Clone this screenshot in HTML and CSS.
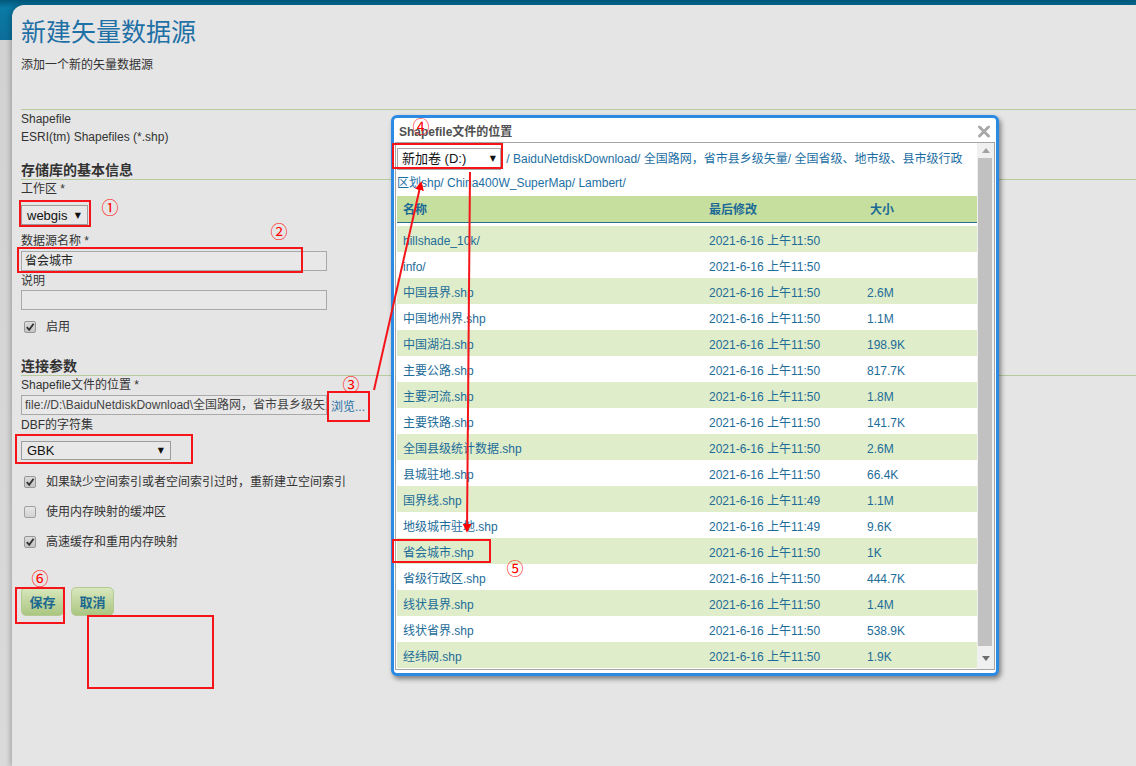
FILE: index.html
```html
<!DOCTYPE html>
<html lang="zh-CN">
<head>
<meta charset="utf-8">
<title>新建矢量数据源</title>
<link rel="stylesheet" href="styles.css">
</head>
<body>
<div class="app">
  <div class="rail"></div>
  <main class="card">
    <h1 class="title">新建矢量数据源</h1>
    <p class="subtitle">添加一个新的矢量数据源</p>
    <div class="store-type">
      <div>Shapefile</div>
      <div>ESRI(tm) Shapefiles (*.shp)</div>
    </div>

    <h2 class="section">存储库的基本信息</h2>
    <label class="lbl">工作区 *</label>
    <div class="select sel-ws"><span>webgis</span><span class="caret">▼</span></div>
    <label class="lbl lbl-name">数据源名称 *</label>
    <div class="input field-name">省会城市</div>
    <label class="lbl lbl-desc">说明</label>
    <div class="input"></div>
    <div class="check-row row-enable"><span class="cb checked"><svg width="10" height="10" viewBox="0 0 10 10"><path d="M1.8 5.2 L4.2 7.8 L8.6 1.8" fill="none" stroke="#333" stroke-width="1.9"/></svg></span>启用</div>

    <h2 class="section sec-conn">连接参数</h2>
    <label class="lbl">Shapefile文件的位置 *</label>
    <div class="path-row">
      <div class="input path">file://D:\BaiduNetdiskDownload\全国路网，省市县乡级矢量\全国省级、地市级、县市级行政区划shp\China400W_SuperMap\Lambert\省会城市.shp</div>
      <a class="browse">浏览...</a>
    </div>
    <label class="lbl lbl-dbf">DBF的字符集</label>
    <div class="select sel-cs"><span>GBK</span><span class="caret">▼</span></div>
    <div class="check-row opt first"><span class="cb checked"><svg width="10" height="10" viewBox="0 0 10 10"><path d="M1.8 5.2 L4.2 7.8 L8.6 1.8" fill="none" stroke="#333" stroke-width="1.9"/></svg></span>如果缺少空间索引或者空间索引过时，重新建立空间索引</div>
    <div class="check-row opt"><span class="cb"></span>使用内存映射的缓冲区</div>
    <div class="check-row opt"><span class="cb checked"><svg width="10" height="10" viewBox="0 0 10 10"><path d="M1.8 5.2 L4.2 7.8 L8.6 1.8" fill="none" stroke="#333" stroke-width="1.9"/></svg></span>高速缓存和重用内存映射</div>

    <div class="buttons">
      <button class="btn">保存</button>
      <button class="btn">取消</button>
    </div>
  </main>
</div>

<div class="dialog">
  <div class="dlg-head">
    <span>Shapefile文件的位置</span>
    <svg class="close" width="14" height="13" viewBox="0 0 14 13"><path d="M2.5 2 L11.5 11 M11.5 2 L2.5 11" stroke="#a9a9a9" stroke-width="3" stroke-linecap="round"/></svg>
  </div>
  <div class="dlg-body">
    <div class="dlg-scroll">
      <div class="crumbs"><span class="drive"><span>新加卷 (D:)</span><span class="caret">▼</span></span> / BaiduNetdiskDownload/ 全国路网，省市县乡级矢量/ 全国省级、地市级、县市级行政区划shp/ China400W_SuperMap/ Lambert/</div>
      <div class="grid grid-head"><span>名称</span><span>最后修改</span><span class="c3">大小</span></div>
      <div class="rows">
        <div class="grid row"><span>hillshade_10k/</span><span>2021-6-16 上午11:50</span><span></span></div>
        <div class="grid row"><span>info/</span><span>2021-6-16 上午11:50</span><span></span></div>
        <div class="grid row"><span>中国县界.shp</span><span>2021-6-16 上午11:50</span><span>2.6M</span></div>
        <div class="grid row"><span>中国地州界.shp</span><span>2021-6-16 上午11:50</span><span>1.1M</span></div>
        <div class="grid row"><span>中国湖泊.shp</span><span>2021-6-16 上午11:50</span><span>198.9K</span></div>
        <div class="grid row"><span>主要公路.shp</span><span>2021-6-16 上午11:50</span><span>817.7K</span></div>
        <div class="grid row"><span>主要河流.shp</span><span>2021-6-16 上午11:50</span><span>1.8M</span></div>
        <div class="grid row"><span>主要铁路.shp</span><span>2021-6-16 上午11:50</span><span>141.7K</span></div>
        <div class="grid row"><span>全国县级统计数据.shp</span><span>2021-6-16 上午11:50</span><span>2.6M</span></div>
        <div class="grid row"><span>县城驻地.shp</span><span>2021-6-16 上午11:50</span><span>66.4K</span></div>
        <div class="grid row"><span>国界线.shp</span><span>2021-6-16 上午11:49</span><span>1.1M</span></div>
        <div class="grid row"><span>地级城市驻地.shp</span><span>2021-6-16 上午11:49</span><span>9.6K</span></div>
        <div class="grid row"><span>省会城市.shp</span><span>2021-6-16 上午11:50</span><span>1K</span></div>
        <div class="grid row"><span>省级行政区.shp</span><span>2021-6-16 上午11:50</span><span>444.7K</span></div>
        <div class="grid row"><span>线状县界.shp</span><span>2021-6-16 上午11:50</span><span>1.4M</span></div>
        <div class="grid row"><span>线状省界.shp</span><span>2021-6-16 上午11:50</span><span>538.9K</span></div>
        <div class="grid row"><span>经纬网.shp</span><span>2021-6-16 上午11:50</span><span>1.9K</span></div>
      </div>
    </div>
    <div class="vscroll">
      <div class="sb-btn"><svg width="8" height="5" viewBox="0 0 8 5"><path d="M0 5 L4 0 L8 5z" fill="#a3a3a3"/></svg></div>
      <div class="thumb"></div>
      <div class="sb-btn sb-down"><svg width="8" height="5" viewBox="0 0 8 5"><path d="M0 0 L4 5 L8 0z" fill="#6f6f6f"/></svg></div>
    </div>
  </div>
</div>

<svg class="marks" width="1136" height="766" viewBox="0 0 1136 766">
  <defs>
    <marker id="ah" viewBox="0 0 10 10" refX="8" refY="5" markerWidth="4.5" markerHeight="4.5" orient="auto">
      <path d="M0 0 L10 5 L0 10 z" fill="#f00"/>
    </marker>
  </defs>
  <g fill="none" stroke="#f5141a" stroke-width="2">
    <rect x="20" y="201" width="70" height="25"/>
    <rect x="18" y="248" width="284" height="24"/>
    <rect x="328" y="392" width="41" height="29"/>
    <rect x="16" y="435" width="176" height="28"/>
    <rect x="16" y="588" width="48" height="35"/>
    <rect x="88" y="616" width="125" height="72"/>
    <rect x="393" y="144" width="109" height="24"/>
    <rect x="393" y="540" width="97" height="22"/>
    <line x1="374" y1="390" x2="421" y2="183" marker-end="url(#ah)"/>
    <line x1="470" y1="172" x2="467" y2="531" marker-end="url(#ah)"/>
  </g>
  <g class="nums" fill="#f00" text-anchor="middle" dominant-baseline="central">
    <text x="110" y="206">①</text>
    <text x="279" y="230">②</text>
    <text x="351" y="383">③</text>
    <text x="421" y="125">④</text>
    <text x="515" y="567">⑤</text>
    <text x="40" y="577">⑥</text>
  </g>
</svg>
</body>
</html>
```

FILE: styles.css
```css
* { box-sizing: border-box; }

html, body {
  margin: 0;
  padding: 0;
}

body {
  position: relative;
  width: 1136px;
  height: 766px;
  overflow: hidden;
  font-family: "Liberation Sans", "Noto Sans CJK SC", sans-serif;
  font-size: 12px;
  color: #333;
  background: #e5e5e5;
}

/* ---------- page frame ---------- */
.app {
  display: flex;
  height: 766px;
  background: linear-gradient(to bottom, #02577a 0, #0a7aa6 8px, #0b6f99 40px, #d2d2d2 40px, #dadada 100%);
}

.rail {
  width: 12px;
  flex: none;
}

.card {
  flex: 1;
  margin-top: 5px;
  padding-left: 9px;
  background: #e5e5e5;
  border-top-left-radius: 12px;
  box-shadow: -2px 0 5px rgba(0, 0, 0, 0.22);
}

.title {
  margin: 12px 0 0;
  font-size: 25px;
  line-height: 30px;
  font-weight: normal;
  color: #1f70a5;
}

.subtitle {
  margin: 9px 0 0;
  line-height: 18px;
}

.store-type {
  margin-top: 35px;
  border-top: 1px solid #b7ca9b;
  line-height: 18px;
}

.section {
  margin: 15px 0 0;
  font-size: 14px;
  line-height: 18px;
  font-weight: bold;
  color: #333;
  border-bottom: 1px solid #b7ca9b;
}

.sec-conn { margin-top: 21px; }

.lbl {
  display: block;
  line-height: 18px;
}

.lbl-name { margin-top: 7px; }
.lbl-desc { margin-top: 1px; }
.lbl-dbf { margin-top: 1px; }

.select {
  display: flex;
  align-items: center;
  justify-content: space-between;
  height: 20px;
  padding: 0 6px 0 5px;
  border: 1px solid #9c9c9c;
  background: #e8e8e8;
  font-size: 13px;
  color: #111;
}

.caret {
  font-family: "DejaVu Sans", sans-serif;
  font-size: 8px;
  color: #111;
}

.sel-ws {
  width: 67px;
  margin-top: 7px;
}

.sel-cs {
  width: 150px;
  height: 19px;
  margin-top: 7px;
}

.input {
  width: 306px;
  height: 20px;
  padding: 0 3px;
  border: 1px solid #a9a9a9;
  background: #e8e8e8;
  line-height: 18px;
  white-space: nowrap;
  overflow: hidden;
}

.field-name { margin-top: 1px; color: #222; }

.check-row {
  display: flex;
  align-items: center;
  height: 18px;
  line-height: 18px;
}

.row-enable { margin-top: 8px; }

.opt { margin-top: 12px; }
.opt.first { margin-top: 13px; }

.cb {
  width: 12px;
  height: 12px;
  margin: 0 10px 0 3px;
  border: 1px solid #a0a0a0;
  border-radius: 2px;
  background: linear-gradient(#e6e6e6, #d2d2d2);
  display: flex;
  align-items: center;
  justify-content: center;
}

.cb.checked {
  background: linear-gradient(#dcdcdc, #c4c4c4);
  border-color: #979797;
}

.path-row {
  display: flex;
  align-items: center;
  margin-top: 1px;
}

.path { color: #444; }

.browse {
  margin-left: 4px;
  color: #1f6fa4;
}

.buttons {
  display: flex;
  gap: 7px;
  margin-top: 36px;
}

.btn {
  width: 43px;
  height: 29px;
  padding: 0;
  border: 1px solid #b5ca93;
  border-radius: 5px;
  background: linear-gradient(#d8e7bd, #aac680);
  font-family: "Liberation Sans", "Noto Sans CJK SC", sans-serif;
  font-size: 13px;
  font-weight: bold;
  color: #1c6890;
}

/* ---------- dialog ---------- */
.dialog {
  position: absolute;
  left: 391px;
  top: 115px;
  width: 608px;
  height: 561px;
  padding: 0 1px 3px 1px;
  border: 3px solid #2b8be4;
  border-radius: 6px;
  background: #fff;
  box-shadow: 2px 3px 5px rgba(0, 0, 0, 0.45);
  display: flex;
  flex-direction: column;
}

.dlg-head {
  height: 24px;
  flex: none;
  display: flex;
  align-items: center;
  justify-content: space-between;
  padding: 0 4px;
  font-weight: bold;
  color: #505050;
}

.close { margin-top: 2px; }

.dlg-body {
  height: 528px;
  flex: none;
  display: flex;
  border: 1px solid #a5a5a5;
}

.dlg-scroll {
  flex: 1;
  overflow: hidden;
  padding: 4px 0 0 1px;
}

.crumbs {
  width: 580px;
  padding-right: 5px;
  line-height: 24px;
  color: #1d6fa3;
}

.drive {
  display: inline-flex;
  align-items: center;
  justify-content: space-between;
  vertical-align: top;
  width: 104px;
  height: 22px;
  margin: 1px 2px 0 0;
  padding: 0 4px 0 4px;
  border: 1px solid #a8a8a8;
  background: #fff;
  font-size: 13px;
  line-height: 20px;
  color: #111;
}

.grid {
  display: grid;
  grid-template-columns: 306px 158px 1fr;
  width: 580px;
}

.grid > span {
  padding-left: 6px;
  white-space: nowrap;
  line-height: 26px;
  height: 26px;
}

.grid-head {
  height: 27px;
  margin-top: 1px;
  background: #c6df9f;
  border-bottom: 1px solid #26708a;
  font-weight: bold;
  color: #1b6a96;
}

.grid-head > span { padding-top: 1px; }

.grid-head .c3 { padding-left: 9px; }

.rows { margin-top: 3px; }

.row {
  height: 26px;
  color: #1d6c98;
  background: #fff;
}

.row > span { padding-top: 2px; }

.row:nth-child(odd) { background: #dfedca; }

.vscroll {
  width: 17px;
  flex: none;
  display: flex;
  flex-direction: column;
  background: #f0f0f0;
}

.sb-btn {
  height: 15px;
  display: flex;
  align-items: center;
  justify-content: center;
  flex: none;
}

.sb-down { margin-bottom: 3px; }

.thumb {
  flex: 1;
  width: 14px;
  margin: 0 0 5px 1px;
  background: #c1c1c1;
}

/* ---------- annotations ---------- */
.marks {
  position: absolute;
  left: 0;
  top: 0;
  pointer-events: none;
}

.nums {
  font-family: "Noto Sans CJK SC", "DejaVu Sans", sans-serif;
  font-size: 17px;
}
```
